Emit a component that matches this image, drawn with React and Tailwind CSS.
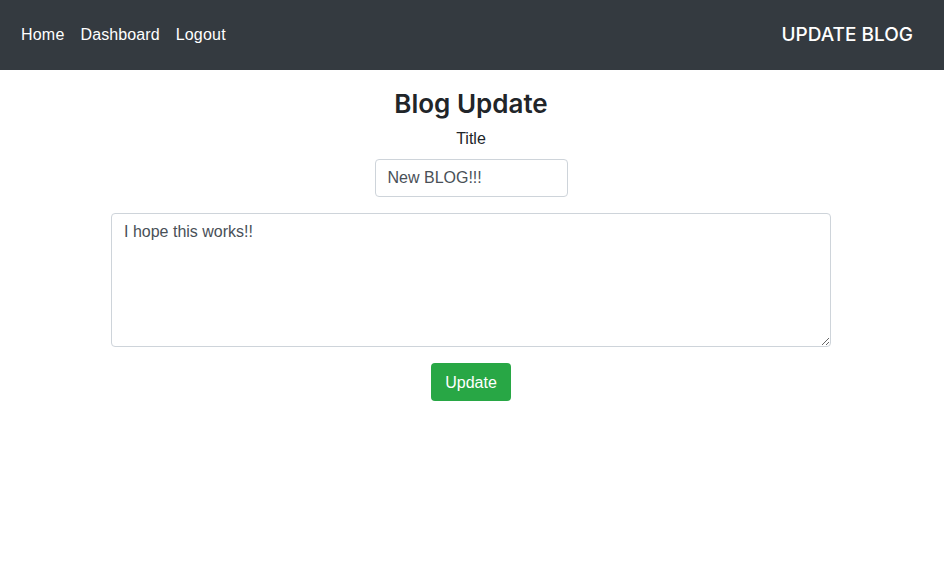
export default function App() {
  return (
    <div className="min-h-screen bg-white font-['Liberation_Sans',Arial,sans-serif] text-[#212529]">
      <nav className="h-[70px] bg-[#343a40] flex items-center justify-between pl-[13px] pr-[31px]">
        <div className="flex items-center text-[16px] text-white">
          <a className="px-2 py-2 tracking-[0.2px]">Home</a>
          <a className="px-2 py-2 tracking-[0.1px]">Dashboard</a>
          <a className="px-2 py-2 tracking-[0.2px]">Logout</a>
        </div>
        <span className="text-[19px] font-medium text-white font-['Inter',sans-serif]">UPDATE BLOG</span>
      </nav>

      <div className="flex flex-col items-center pr-[2px]">
        <h3 className="mt-[18px] text-[26px] leading-[1.2] font-semibold font-['Inter',sans-serif]">Blog Update</h3>
        <label className="mt-[8px] text-[16px] leading-6">Title</label>
        <input
          defaultValue="New BLOG!!!"
          className="mt-[8px] w-[193px] h-[38px] px-3 border border-[#ced4da] rounded-[4px] text-[16px] text-[#495057] outline-none"
        />
        <textarea
          defaultValue="I hope this works!!"
          className="mt-[16px] w-[720px] h-[134px] px-3 py-[6px] border border-[#ced4da] rounded-[4px] text-[16px] leading-6 text-[#495057] outline-none"
        />
        <button className="mt-[16px] w-[80px] h-[38px] pt-[2px] bg-[#28a745] text-white text-[16px] rounded-[4px]">
          Update
        </button>
      </div>
    </div>
  );
}
